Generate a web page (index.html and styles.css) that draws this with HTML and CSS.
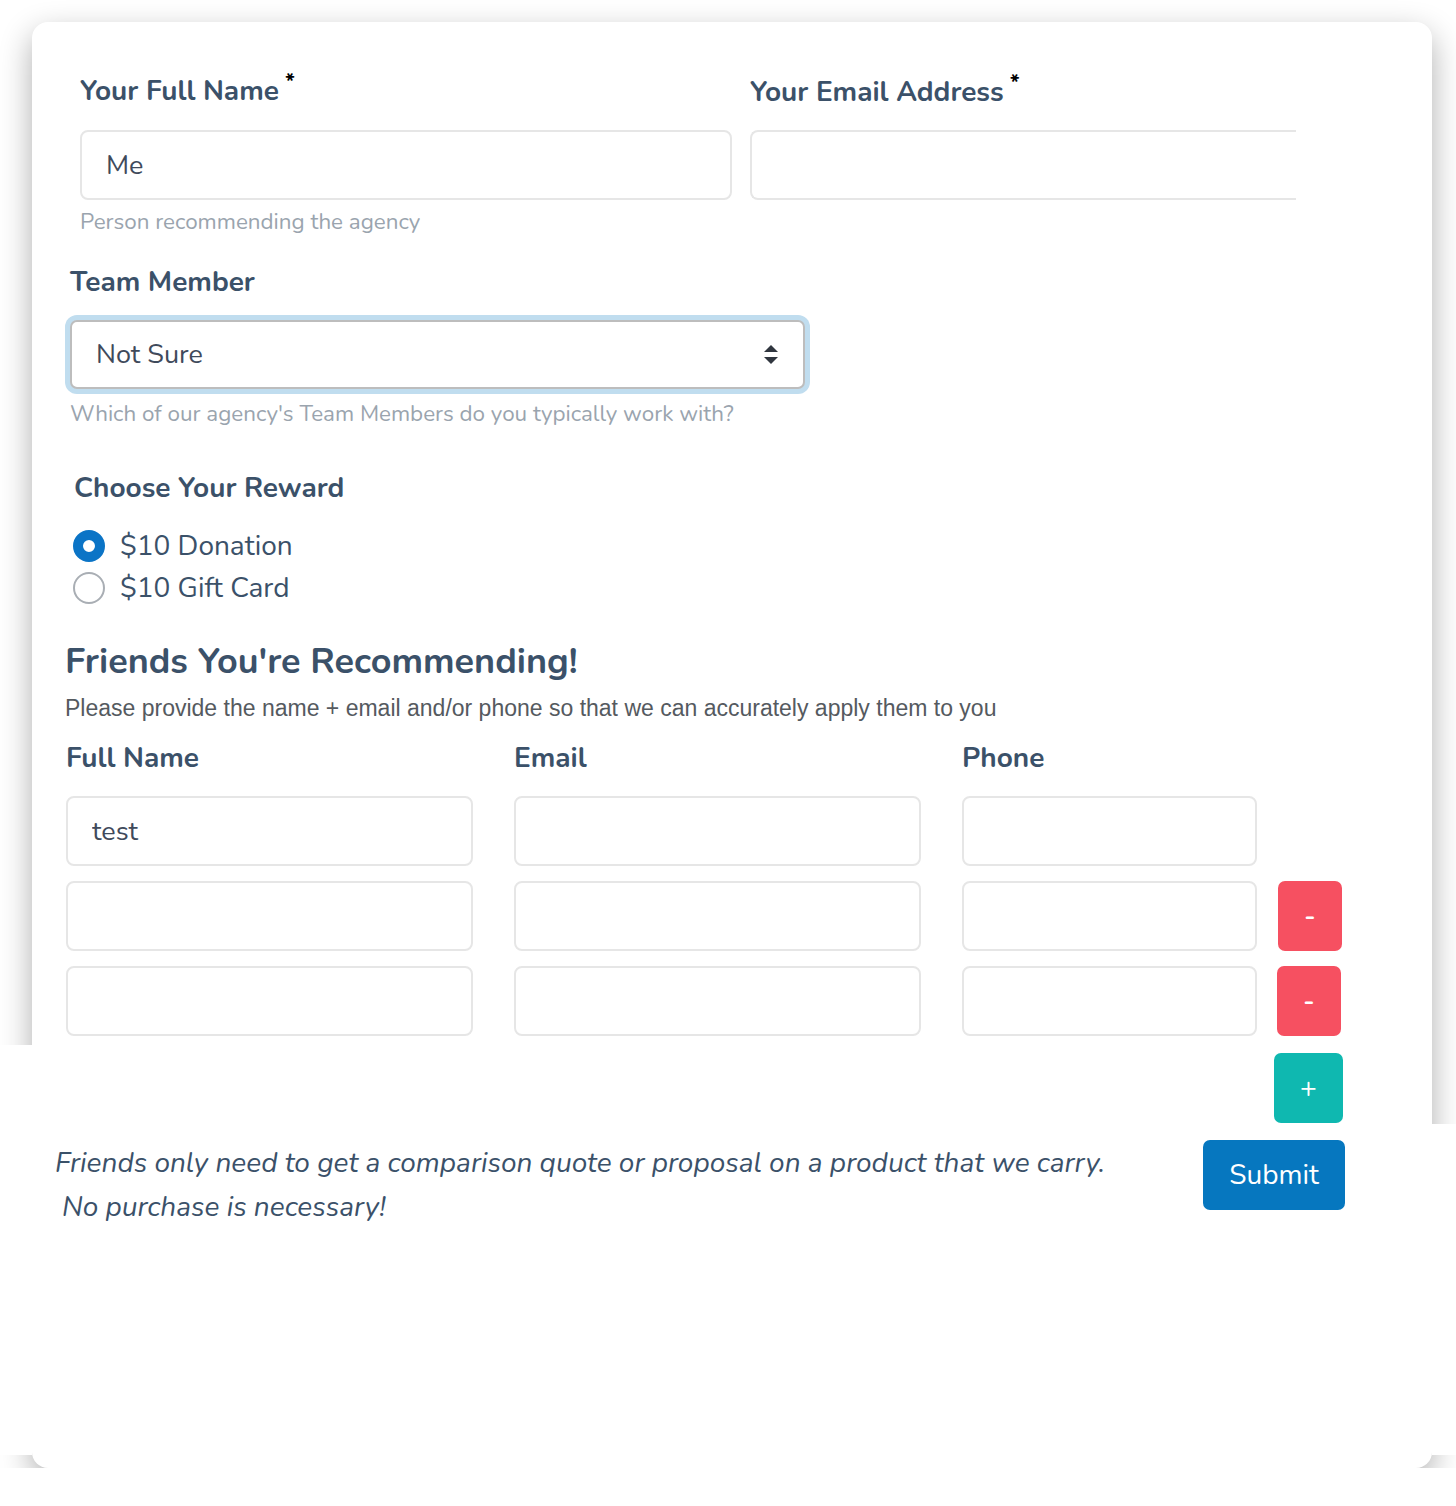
FILE: index.html
```html
<!DOCTYPE html>
<html lang="en">
<head>
    <meta charset="UTF-8">
    <meta name="viewport" content="width=device-width, initial-scale=1.0">
    <title>Referral Form</title>
    <link rel="stylesheet" href="styles.css">
</head>
<body>
    <div class="card">
        <form class="referral-form">
            <div class="top-row">
                <div class="field">
                    <label class="label">Your Full Name<sup class="req">*</sup></label>
                    <input class="text-input" type="text" value="Me">
                    <div class="help">Person recommending the agency</div>
                </div>
                <div class="field field-email">
                    <label class="label">Your Email Address<sup class="req">*</sup></label>
                    <input class="text-input cut-right" type="email">
                </div>
            </div>

            <div class="team-section">
                <label class="label">Team Member</label>
                <div class="select-wrap">
                    <select class="select">
                        <option>Not Sure</option>
                    </select>
                    <svg class="select-arrows" width="16" height="22" viewBox="0 0 16 22">
                        <path d="M8 1 L15 8 L1 8 Z" fill="#30363f"/>
                        <path d="M1 13 L15 13 L8 20 Z" fill="#30363f"/>
                    </svg>
                </div>
                <div class="help">Which of our agency's Team Members do you typically work with?</div>
            </div>

            <div class="reward-section">
                <div class="label">Choose Your Reward</div>
                <div class="radios">
                    <label class="radio-row">
                        <input class="radio" type="radio" name="reward" checked>
                        <span>$10 Donation</span>
                    </label>
                    <label class="radio-row">
                        <input class="radio" type="radio" name="reward">
                        <span>$10 Gift Card</span>
                    </label>
                </div>
            </div>

            <div class="friends-section">
                <h2 class="friends-title">Friends You're Recommending!</h2>
                <p class="friends-sub">Please provide the name + email and/or phone so that we can accurately apply them to you</p>

                <div class="friend-row friend-head">
                    <div class="label">Full Name</div>
                    <div class="label">Email</div>
                    <div class="label">Phone</div>
                </div>
                <div class="friend-rows">
                    <div class="friend-row">
                        <input class="text-input" type="text" value="test">
                        <input class="text-input" type="email">
                        <input class="text-input" type="tel">
                    </div>
                    <div class="friend-row">
                        <input class="text-input" type="text">
                        <input class="text-input" type="email">
                        <input class="text-input" type="tel">
                        <button type="button" class="btn btn-remove">-</button>
                    </div>
                    <div class="friend-row">
                        <input class="text-input" type="text">
                        <input class="text-input" type="email">
                        <input class="text-input" type="tel">
                        <button type="button" class="btn btn-remove shift-left">-</button>
                    </div>
                </div>
                <div class="add-row">
                    <button type="button" class="btn btn-add">+</button>
                </div>
            </div>

            <div class="form-footer">
                <p class="note">Friends only need to get a comparison quote or proposal on a product that we carry.<span class="note-line">No purchase is necessary!</span></p>
                <button type="submit" class="btn btn-submit">Submit</button>
            </div>
        </form>
    </div>

    <!-- white panels laid over the card shadow -->
    <div class="shade-mask mask-left"></div>
    <div class="shade-mask mask-right"></div>
</body>
</html>
```

FILE: styles.css
```css
body {
    margin: 0;
    background-color: #ffffff;
    font-family: "Nunito", "Lato", "Open Sans", sans-serif;
    color: #3b5169;
}
.card {
    width: 1400px;
    height: 1446px;
    margin: 22px 0 0 32px;
    background-color: #ffffff;
    border-radius: 16px;
    box-shadow: 0 12px 32px rgba(0, 0, 0, 0.32);
    box-sizing: border-box;
    padding-top: 53px;
}
.label {
    display: block;
    font-size: 28px;
    font-weight: bold;
    line-height: 32px;
    color: #3b5169;
}
.req {
    font-size: 22px;
    color: #000;
    vertical-align: top;
    line-height: 14px;
    margin-left: 6px;
}
.help {
    font-size: 22.4px;
    line-height: 26px;
    color: #9aa4ae;
}
.text-input {
    display: block;
    box-sizing: border-box;
    height: 70px;
    width: 100%;
    margin: 0;
    padding: 0 24px;
    border: 2px solid #e6e6e6;
    border-radius: 8px;
    background: #fff;
    font-family: inherit;
    font-size: 27px;
    color: #3f4a5b;
    outline: none;
}

/* name + email */
.top-row {
    display: grid;
    grid-template-columns: 652px 546px;
    column-gap: 18px;
    margin-left: 48px;
}
.top-row .text-input {
    margin-top: 23px;
}
.top-row .help {
    margin-top: 9px;
}
.field-email .label {
    margin-top: 1px;
}
.field-email .text-input {
    margin-top: 22px;
}
.cut-right {
    border-right: none;
    border-radius: 8px 0 0 8px;
}

/* team member */
.team-section {
    margin: 31px 0 0 38px;
    width: 735px;
}
.select-wrap {
    position: relative;
    margin-top: 22px;
}
.select {
    display: block;
    width: 100%;
    height: 69px;
    box-sizing: border-box;
    appearance: none;
    -webkit-appearance: none;
    border: 2px solid #bdbdbd;
    border-radius: 7px;
    box-shadow: 0 0 0 5px #c0ddef;
    background: #fff;
    padding: 0 24px;
    font-family: inherit;
    font-size: 27px;
    color: #3f4a5b;
    outline: none;
}
.select-arrows {
    position: absolute;
    right: 26px;
    top: 24px;
}
.team-section .help {
    margin-top: 12px;
}

/* reward */
.reward-section {
    margin: 45px 0 0 42px;
}
.radios {
    margin-top: 21px;
}
.radio-row {
    display: flex;
    align-items: center;
    height: 42px;
    gap: 15px;
    font-size: 28px;
    color: #3b5169;
}
.radio {
    appearance: none;
    -webkit-appearance: none;
    width: 32px;
    height: 32px;
    margin: 0 0 0 -1px;
    border: 2px solid #a9aeb4;
    border-radius: 50%;
    box-sizing: border-box;
    background: #fff;
}
.radio:checked {
    border: 10px solid #0b74c6;
}

/* friends */
.friends-section {
    margin: 32px 0 0 33px;
}
.friends-title {
    margin: 0;
    font-size: 36px;
    line-height: 42px;
    font-weight: bold;
    color: #3b5169;
}
.friends-sub {
    margin: 12px 0 0;
    font-family: "Liberation Sans", Arial, sans-serif;
    font-size: 23px;
    line-height: 26px;
    color: #555a5f;
}
.friend-row {
    display: grid;
    grid-template-columns: 407px 407px 295px 64px;
    column-gap: 41px;
    align-items: center;
}
.friend-row .btn {
    margin-left: -20px;
}
.friend-head {
    margin: 21px 0 0 1px;
}
.friend-rows {
    display: flex;
    flex-direction: column;
    gap: 15px;
    margin: 22px 0 0 1px;
}
.btn {
    border: none;
    border-radius: 7px;
    color: #fff;
    font-family: inherit;
    cursor: pointer;
}
.btn-remove {
    width: 64px;
    height: 70px;
    background-color: #f65061;
    font-size: 26px;
    font-weight: bold;
}
.friend-row .shift-left {
    margin-left: -21px;
}
.add-row {
    display: flex;
    margin: 17px 0 0 1209px;
}
.btn-add {
    width: 69px;
    height: 70px;
    background-color: #0fb8b0;
    font-size: 28px;
}

/* footer */
.form-footer {
    display: flex;
    align-items: flex-start;
    margin: 18px 0 0 23px;
}
.note {
    margin: 0;
    width: 1148px;
    font-style: italic;
    font-size: 28px;
    line-height: 44px;
    color: #3b5169;
}
.note-line {
    display: block;
    padding-left: 7px;
}
.btn-submit {
    width: 142px;
    height: 70px;
    margin-top: -1px;
    background-color: #0677bf;
    font-size: 28px;
}

.shade-mask {
    position: absolute;
    background-color: #ffffff;
}
.mask-left {
    left: 0;
    top: 1045px;
    width: 32px;
    height: 410px;
}
.mask-right {
    left: 1432px;
    top: 1124px;
    width: 24px;
    height: 331px;
}
```
